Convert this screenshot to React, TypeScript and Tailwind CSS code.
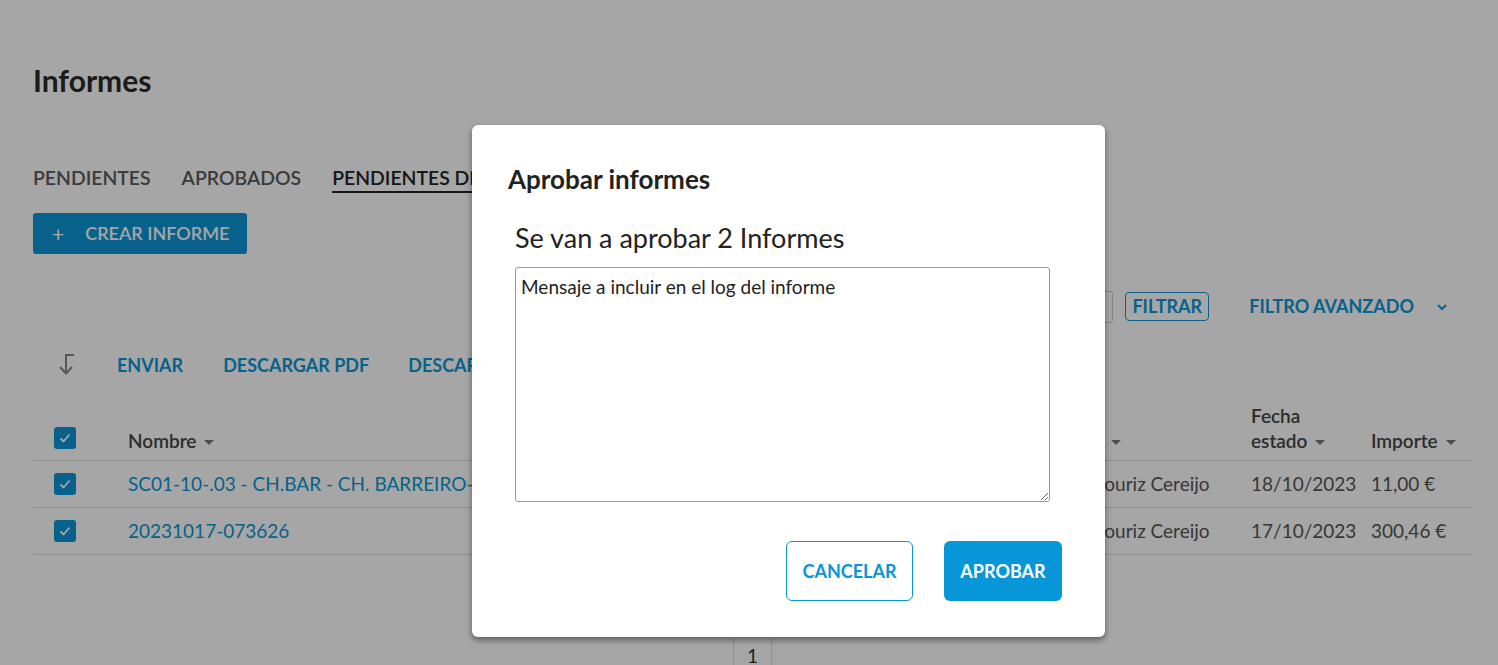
import React from "react";

const BLUE = "#0796d8";

function SortCaret() {
  return (
    <svg width="10" height="6" viewBox="0 0 10 6" className="ml-2 inline-block">
      <path d="M0 0 L10 0 L5 5 Z" fill="#777" />
    </svg>
  );
}

function Check() {
  return (
    <div className="flex h-[22px] w-[22px] items-center justify-center rounded-[3px] bg-[#0b96d6]">
      <svg width="14" height="14" viewBox="0 0 14 14">
        <path d="M2.5 7.5 L5.5 10.5 L11.5 3.5" stroke="#fff" strokeWidth="1.8" fill="none" />
      </svg>
    </div>
  );
}

const cols = "grid grid-cols-[87px_500px_200px_180px_243px_120px_109px]";

const rows = [
  {
    nombre: "SC01-10-.03 - CH.BAR - CH. BARREIRO-GARCÍA",
    estado: "Pendiente",
    fecha: "16/10/2023",
    user: "José Luis Souriz Cereijo",
    fechaEstado: "18/10/2023",
    importe: "11,00 €",
  },
  {
    nombre: "20231017-073626",
    estado: "Pendiente",
    fecha: "17/10/2023",
    user: "José Luis Souriz Cereijo",
    fechaEstado: "17/10/2023",
    importe: "300,46 €",
  },
];

export default function App() {
  return (
    <div
      className="relative h-[665px] w-[1498px] overflow-hidden bg-white"
      style={{ fontFamily: "Lato, 'Open Sans', sans-serif" }}
    >
      {/* Page */}
      <div className="pl-[33px] pr-[26px] pt-[61px]">
        <h1 className="text-[30px] font-bold leading-[38px] text-[#2a2a2a]">Informes</h1>

        {/* Tabs */}
        <div className="mt-[67px] flex gap-[31px] text-[19.4px] font-semibold leading-[24px]">
          <span className="text-[#5a5a5a]">PENDIENTES</span>
          <span className="text-[#5a5a5a]">APROBADOS</span>
          <span className="border-b-2 border-[#222] pb-[1px] text-[#222]">PENDIENTES DE ENVIAR</span>
        </div>

        <button className="mt-[20px] flex h-[41px] w-[214px] items-center rounded-[3px] bg-[#0b96d6] pl-[19px] text-[18px] font-semibold text-white">
          <span className="mr-[21px] text-[21px] font-normal">+</span>
          CREAR INFORME
        </button>

        {/* Filter row */}
        <div className="mt-[38px] flex h-[29px] items-center justify-end">
          <div className="h-[32px] w-[300px] rounded-[3px] border border-[#ccc]" />
          <button className="ml-[12px] flex h-[29px] w-[84px] items-center justify-center rounded-[4px] border border-[#0b96d6] text-[18px] font-bold text-[#0b96d6]">
            FILTRAR
          </button>
          <span className="ml-[40px] text-[18px] font-bold text-[#0b96d6]">FILTRO AVANZADO</span>
          <svg width="12" height="8" viewBox="0 0 12 8" className="ml-[22px] mr-[24px]">
            <path d="M2 2 L6 6 L10 2" stroke="#0b96d6" strokeWidth="2" fill="none" />
          </svg>
        </div>

        {/* Actions row */}
        <div className="mt-[30px] flex h-[28px] items-center text-[18px] font-bold text-[#0b96d6]">
          <svg width="24" height="26" viewBox="0 0 24 26" className="ml-[22px]">
            <path d="M19 3 H11 V21" stroke="#888" strokeWidth="2" fill="none" />
            <path d="M5 15 L11 21.5 L17 15" stroke="#888" strokeWidth="2" fill="none" />
          </svg>
          <span className="ml-[38px]">ENVIAR</span>
          <span className="ml-[40px]">DESCARGAR PDF</span>
          <span className="ml-[39px]">DESCARGAR EXCEL</span>
        </div>

        {/* Table */}
        <div className="mt-[15px] text-[19px]">
          <div className={`${cols} h-[67px] items-end border-b border-[#ddd] pb-[7px] font-semibold leading-[25px] text-[#444]`}>
            <div className="pl-[21px] pb-[4px]">
              <Check />
            </div>
            <div className="px-2">
              Nombre
              <SortCaret />
            </div>
            <div className="px-2">
              Estado
              <SortCaret />
            </div>
            <div className="px-2">
              Fecha
              <SortCaret />
            </div>
            <div className="pl-[15px]">
              Solicitante
              <SortCaret />
            </div>
            <div className="px-2">
              Fecha estado
              <SortCaret />
            </div>
            <div className="px-2">
              Importe
              <SortCaret />
            </div>
          </div>
          {rows.map((r) => (
            <div key={r.nombre} className={`${cols} h-[47px] items-center border-b border-[#ddd] text-[#555]`}>
              <div className="pl-[21px]">
                <Check />
              </div>
              <div className="truncate px-2 text-[#0b96d6]">{r.nombre}</div>
              <div className="px-2">{r.estado}</div>
              <div className="px-2">{r.fecha}</div>
              <div className="whitespace-nowrap pl-[15px]">{r.user}</div>
              <div className="whitespace-nowrap px-2">{r.fechaEstado}</div>
              <div className="whitespace-nowrap px-2">{r.importe}</div>
            </div>
          ))}
        </div>

        {/* Pagination */}
        <div className="mt-[84px] flex justify-center">
          <div className="flex h-[40px] w-[39px] justify-center border-x border-[#ddd] pt-[5px] text-[19px] leading-[24px] text-[#333]">
            1
          </div>
        </div>
      </div>

      {/* Backdrop */}
      <div className="absolute inset-0 bg-black/35" />

      {/* Dialog */}
      <div className="absolute left-[472px] top-[125px] flex h-[512px] w-[633px] flex-col rounded-[6px] bg-white pl-[36px] pr-[43px] pt-[38px] shadow-[0_3px_6px_rgba(0,0,0,0.45)]">
        <h2 className="text-[26px] font-bold leading-[32px] text-[#222]">Aprobar informes</h2>
        <p className="mt-[27px] pl-[7px] text-[27px] leading-[32px] text-[#222]">Se van a aprobar 2 Informes</p>
        <div className="mt-[13px] pl-[7px]">
          <textarea
            className="block h-[235px] w-[535px] rounded-[3px] border border-[#999] px-[5px] pb-[9px] pt-[7px] text-[19px] leading-[24px] text-[#222] outline-none"
            defaultValue="Mensaje a incluir en el log del informe"
          />
        </div>
        <div className="mt-[39px] flex justify-end gap-[31px]">
          <button className="h-[60px] w-[127px] rounded-[6px] border border-[#0796d8] text-[18px] font-bold text-[#0796d8]">
            CANCELAR
          </button>
          <button className="h-[60px] w-[118px] rounded-[6px] text-[18px] font-bold text-white" style={{ background: BLUE }}>
            APROBAR
          </button>
        </div>
      </div>
    </div>
  );
}
